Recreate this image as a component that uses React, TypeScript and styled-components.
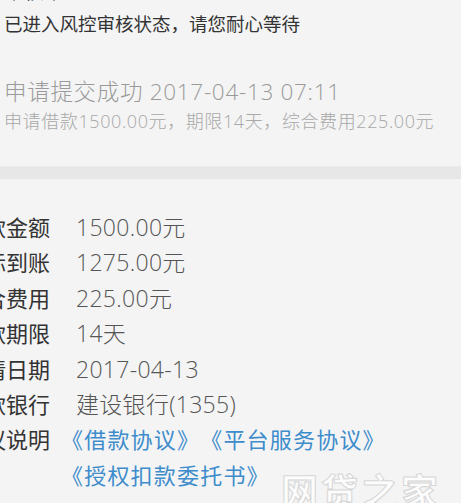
import React from "react";
import styled, { createGlobalStyle } from "styled-components";

const GlobalStyle = createGlobalStyle`
  html, body {
    margin: 0;
    padding: 0;
    background: #f4f4f4;
    font-family: "Open Sans", "Noto Sans CJK SC", sans-serif;
    overflow: hidden;
  }
`;

const Page = styled.div`
  width: 461px;
  height: 503px;
  position: relative;
  overflow: hidden;
  background: #f4f4f4;
`;

const StatusBlock = styled.section`
  margin-top: -22px;
  padding: 0 0 0 4px;
`;

const StatusTitle = styled.div`
  font-size: 20px;
  line-height: 28px;
  color: #222;
`;

const StatusNote = styled.div`
  font-size: 18.5px;
  line-height: 26px;
  color: #333;
  margin-top: 5px;
`;

const Timeline = styled.section`
  padding: 40px 0 33px 4px;
`;

const TimelineHead = styled.div`
  font-size: 22.5px;
  line-height: 30px;
  color: #9a9a9a;
  font-weight: 300;
  letter-spacing: 0.7px;
`;

const TimelineSub = styled.div`
  font-size: 18px;
  line-height: 24px;
  color: #a8a8a8;
  margin-top: 2px;
  font-weight: 300;
  letter-spacing: 0.6px;
`;

const Divider = styled.div`
  height: 12px;
  background: #e7e7e7;
  border-top: 1px solid #ececec;
`;

const InfoList = styled.div`
  padding-top: 31px;
  margin-left: -38px;
  display: flex;
  flex-direction: column;
`;

const InfoRow = styled.div`
  display: flex;
  align-items: flex-start;
  gap: 26px;
  min-height: 35.4px;
  font-size: 22px;
  line-height: 35.4px;
`;

const Label = styled.div`
  width: 88px;
  flex: none;
  color: #333;
`;

const Value = styled.div`
  color: #555;
  font-size: 23px;
  font-weight: 300;
  letter-spacing: 0.3px;
`;

const Links = styled.div`
  display: flex;
  flex-wrap: wrap;
  width: 340px;
  margin-left: -15px;
`;

const DocLink = styled.a`
  color: #3d8ccc;
  text-decoration: none;
  font-size: 22px;
  letter-spacing: 1.2px;
`;

const Watermark = styled.div`
  position: absolute;
  right: 20px;
  bottom: -14px;
  font-size: 37px;
  letter-spacing: 3px;
  color: rgba(255, 255, 255, 0.75);
  -webkit-text-stroke: 1px #d6d6d6;
  font-weight: 700;
`;

const rows = [
  { label: "借款金额", value: "1500.00元" },
  { label: "实际到账", value: "1275.00元" },
  { label: "综合费用", value: "225.00元" },
  { label: "借款期限", value: "14天" },
  { label: "申请日期", value: "2017-04-13" },
  { label: "收款银行", value: "建设银行(1355)" },
];

const docs = ["《借款协议》", "《平台服务协议》", "《授权扣款委托书》"];

export default function App() {
  return (
    <Page>
      <GlobalStyle />
      <StatusBlock>
        <StatusTitle>审核中</StatusTitle>
        <StatusNote>已进入风控审核状态，请您耐心等待</StatusNote>
      </StatusBlock>
      <Timeline>
        <TimelineHead>申请提交成功 2017-04-13 07:11</TimelineHead>
        <TimelineSub>申请借款1500.00元，期限14天，综合费用225.00元</TimelineSub>
      </Timeline>
      <Divider />
      <InfoList>
        {rows.map((r) => (
          <InfoRow key={r.label}>
            <Label>{r.label}</Label>
            <Value>{r.value}</Value>
          </InfoRow>
        ))}
        <InfoRow>
          <Label>协议说明</Label>
          <Links>
            {docs.map((d) => (
              <DocLink key={d} href="#">
                {d}
              </DocLink>
            ))}
          </Links>
        </InfoRow>
      </InfoList>
      <Watermark>网贷之家</Watermark>
    </Page>
  );
}
